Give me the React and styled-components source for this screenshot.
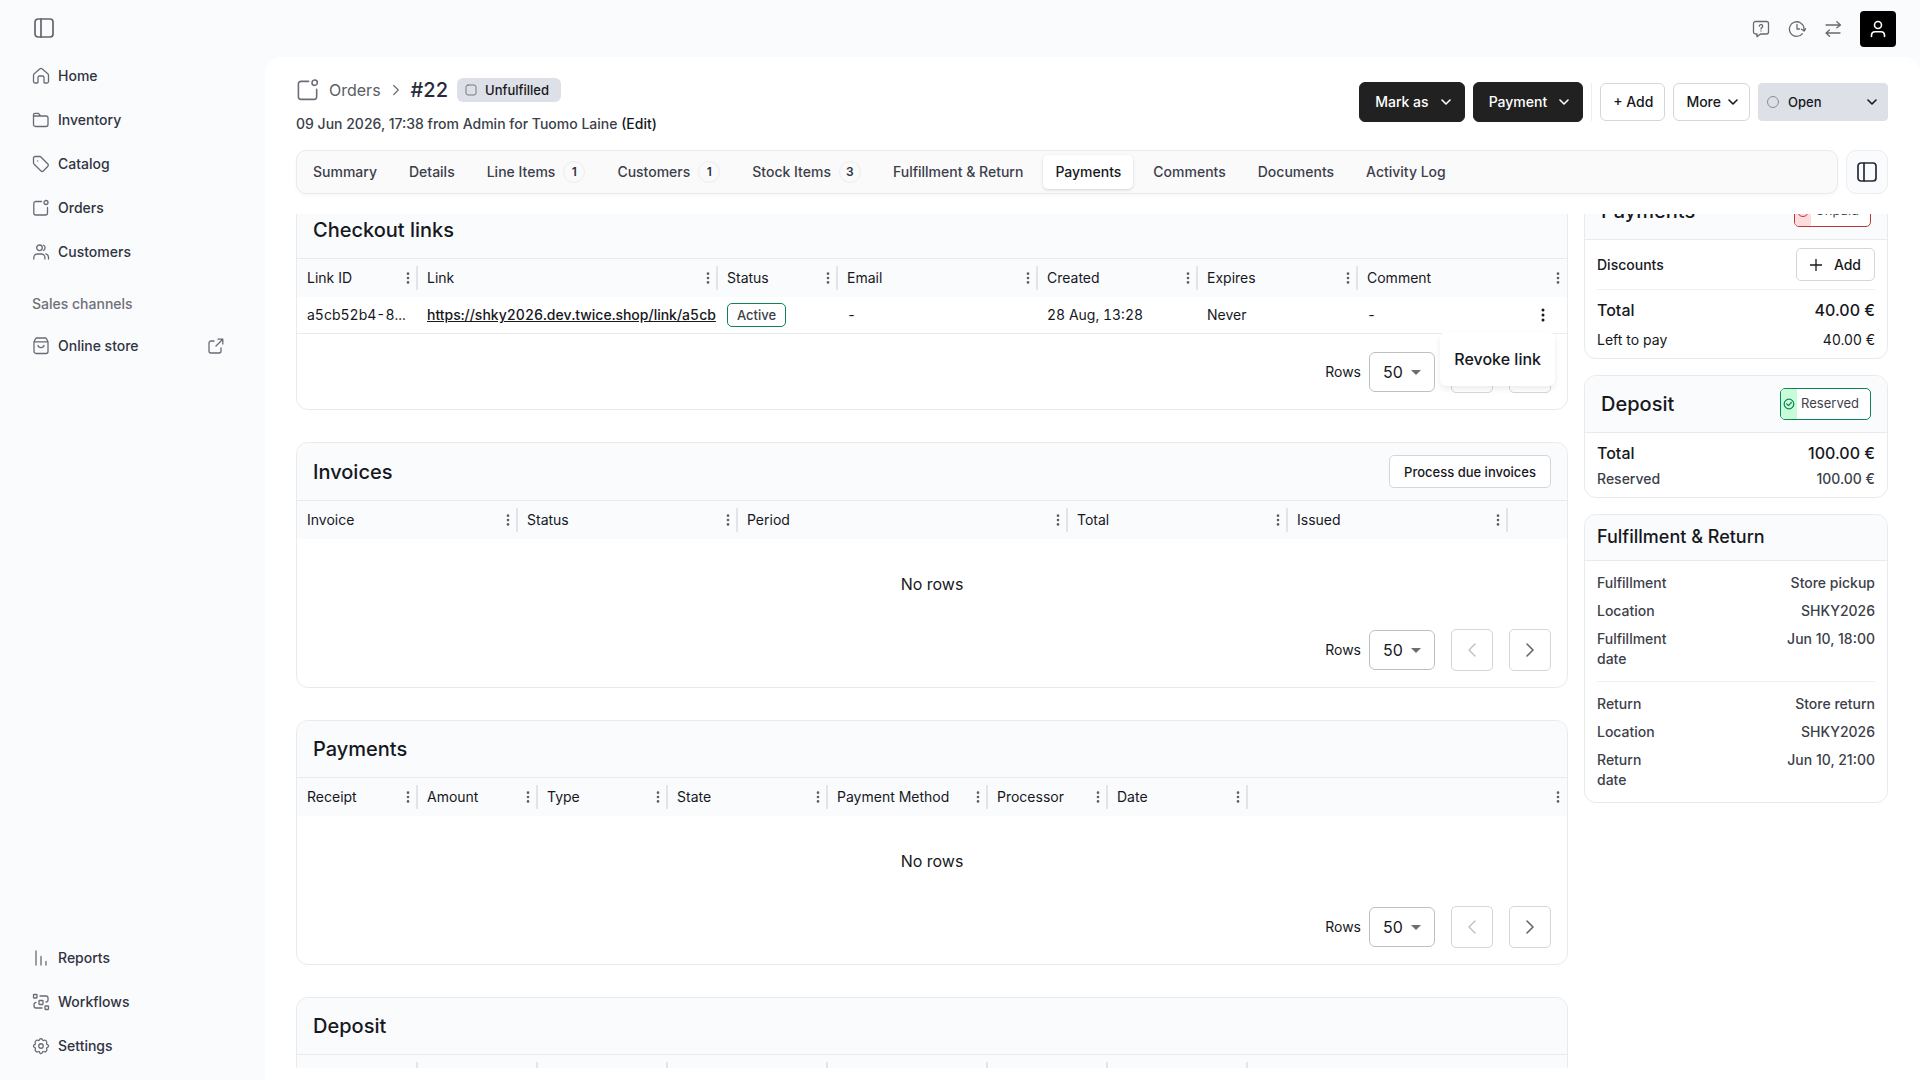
import { useLayoutEffect, useRef, useState } from "react";
import styled, { createGlobalStyle } from "styled-components";

const HomeIcon = () => (
  <Icon viewBox="0 0 18 18">
    <path d="M1.500 8.200a2 2 0 0 1 .7-1.500L7.700 2a2 2 0 0 1 2.600 0l5.500 4.700a2 2 0 0 1 .7 1.500v6.300a1.500 1.500 0 0 1-1.500 1.500h-2.200a.8.8 0 0 1-.8-.8V10.500A1.500 1.500 0 0 0 10.500 9h-3A1.500 1.500 0 0 0 6 10.500v4.700a.8.8 0 0 1-.8.8H3a1.500 1.500 0 0 1-1.500-1.500z" />
  </Icon>
);
const FolderIcon = () => (
  <Icon viewBox="0 0 18 18">
    <path d="M1.500 5.500V3.800A1.500 1.500 0 0 1 3 2.300h3.500L8.500 5H14a2 2 0 0 1 2 2v6.500a2 2 0 0 1-2 2H3.500a2 2 0 0 1-2-2V5H8.500" />
  </Icon>
);
const TagIcon = () => (
  <Icon viewBox="0 0 18 18">
    <path d="M1.500 3A1.500 1.500 0 0 1 3 1.500h4.700c.5 0 .9.200 1.200.5l7 7a1.600 1.600 0 0 1 0 2.200l-4.600 4.800a1.600 1.600 0 0 1-2.300 0L2.200 9.300A2 2 0 0 1 1.500 8z" />
    <path d="M5.700 5.900v.1" />
  </Icon>
);
const OrderIcon = ({ size, stroke }) => (
  <Icon viewBox="0 0 18 18" $size={size} $stroke={stroke}>
    <path d="M9.500 2.500H3.800a2 2 0 0 0-2 2V14a2 2 0 0 0 2 2h9.700a2 2 0 0 0 2-2V8.500" />
    <circle cx="14" cy="3.500" r="2" />
  </Icon>
);
const UsersIcon = () => (
  <Icon viewBox="0 0 18 18">
    <circle cx="7.500" cy="4.800" r="2.800" />
    <path d="M1.800 16v-1.300A3.700 3.700 0 0 1 5.500 11h3.700a3.700 3.700 0 0 1 3.700 3.700V16M11.500 2.200a3 3 0 0 1 0 5.300M13.800 10.800a3.700 3.700 0 0 1 2.700 3.600V16" />
  </Icon>
);
const StoreIcon = () => (
  <Icon viewBox="0 0 18 18">
    <path d="M2 4.800 3.500 1.800A1.500 1.500 0 0 1 4.800 1h8.400a1.500 1.500 0 0 1 1.300.8L16 4.800v9.700a2 2 0 0 1-2 2H4a2 2 0 0 1-2-2zM2 4.800h14M6 8.300c.5 3 5.500 3 6 0" />
  </Icon>
);
const ExternalIcon = () => (
  <Icon viewBox="0 0 18 18">
    <path d="M7 4H4a2 2 0 0 0-2 2v8a2 2 0 0 0 2 2h8a2 2 0 0 0 2-2v-3M9 9l6.500-6.500M11 2.200h4.800V7" />
  </Icon>
);
const ReportsIcon = () => (
  <Icon viewBox="0 0 18 18">
    <path d="M4 2v14M9 7.500V16M14 12.500V16" />
  </Icon>
);
const WorkflowIcon = () => (
  <Icon viewBox="0 0 18 18">
    <rect x="1.500" y="1.500" width="3.500" height="3.500" rx=".5" />
    <rect x="7" y="7.500" width="4" height="4" rx=".5" />
    <rect x="13" y="13" width="3.500" height="3.500" rx=".5" />
    <path d="M8 3h6a2 2 0 0 1 2 2v2a2 2 0 0 1-2 2M4 9.500a2 2 0 0 0-2 2V13a2 2 0 0 0 2 2h6" />
  </Icon>
);
const GearIcon = () => (
  <Icon viewBox="0 0 24 24" $stroke={1.700}>
    <circle cx="12" cy="12" r="3" />
    <path d="M10.300 3.300c.4-1.700 2.900-1.700 3.400 0a1.700 1.700 0 0 0 2.600 1.100c1.500-1 4.300 1.800 3.400 3.300a1.700 1.700 0 0 0 1 2.600c1.800.5 1.800 3 0 3.400a1.700 1.700 0 0 0-1 2.600c.9 1.500-1.900 4.300-3.400 3.400a1.700 1.700 0 0 0-2.600 1c-.5 1.800-3 1.800-3.400 0a1.700 1.700 0 0 0-2.600-1c-1.500.9-4.300-1.900-3.400-3.400a1.700 1.700 0 0 0-1-2.600c-1.800-.4-1.800-2.900 0-3.400a1.700 1.700 0 0 0 1-2.600c-.9-1.500 1.900-4.300 3.400-3.300 1 .6 2.300.1 2.600-1.100z" />
  </Icon>
);
const PanelIcon = () => (
  <Icon viewBox="0 0 20 20" $size={20} $stroke={1.700}>
    <rect x="1" y="1" width="18" height="18" rx="3" />
    <path d="M7 1v18" />
  </Icon>
);
const HelpIcon = () => (
  <Icon viewBox="0 0 18 18">
    <path d="M3.500 1.500h11a2 2 0 0 1 2 2v8.500a2 2 0 0 1-2 2H8.500L5 16.800V14H3.500a2 2 0 0 1-2-2V3.500a2 2 0 0 1 2-2z" />
    <path d="M7.300 6.200a1.700 1.700 0 1 1 2.500 1.500c-.6.300-.8.600-.8 1.200M9 10.900v.1" />
  </Icon>
);
const HistoryIcon = () => (
  <Icon viewBox="0 0 18 18">
    <path d="M14.300 13.800A7.300 7.300 0 1 1 16 8.500v2M9 4.500V9h2.500M13.500 9.200l2.500 1.800 1.700-2.300" />
  </Icon>
);
const SwapIcon = () => (
  <Icon viewBox="0 0 18 18">
    <path d="M2 5h14.500M12.800 1.800 16.500 5l-3.700 2.800M16 13H2M5.500 10 2 13l3.500 3.200" />
  </Icon>
);
const UserIcon = () => (
  <Icon viewBox="0 0 18 18" $stroke={1.600}>
    <circle cx="9" cy="5" r="3.500" />
    <path d="M2.500 16.500V15A3.500 3.500 0 0 1 6 11.800h6a3.500 3.500 0 0 1 3.500 3.200v1.500" />
  </Icon>
);
const ChevronDown = () => (
  <Icon viewBox="0 0 10 10" $size={10} $stroke={1.600}>
    <path d="M1 3l4 4 4-4" />
  </Icon>
);
const ChevronLeft = () => (
  <Icon viewBox="0 0 10 16" $size={16}>
    <path d="M8 2 2 8l6 6" />
  </Icon>
);
const ChevronRight = ({ size = 16 }) => (
  <Icon viewBox="0 0 10 16" $size={size} $stroke={1.600}>
    <path d="M2 2l6 6-6 6" />
  </Icon>
);
const PlusIcon = () => (
  <Icon viewBox="0 0 12 12" $size={12}>
    <path d="M6 0v12M0 6h12" />
  </Icon>
);
const SquareIcon = () => (
  <Icon viewBox="0 0 12 12" $size={12} $stroke={1}>
    <rect x="1" y="1" width="10" height="10" rx="2" />
  </Icon>
);
const CircleIcon = () => (
  <Icon viewBox="0 0 12 12" $size={12} $stroke={1}>
    <circle cx="6" cy="6" r="5.500" />
  </Icon>
);
const CheckIcon = () => (
  <Icon viewBox="0 0 12 12" $size={12} $stroke={1.200}>
    <path d="M3.800 6 5.500 7.600 8.300 4.500" />
    <circle cx="6" cy="6" r="4.800" />
  </Icon>
);
const Dots = ({ size = 16 }) => (
  <DotsSvg viewBox="0 0 4 16" $size={size} aria-hidden="true">
    <circle cx="2" cy="3" r="1.500" />
    <circle cx="2" cy="8" r="1.500" />
    <circle cx="2" cy="13" r="1.500" />
  </DotsSvg>
);

const mainNav = [
  { label: "Home", icon: <HomeIcon /> },
  { label: "Inventory", icon: <FolderIcon /> },
  { label: "Catalog", icon: <TagIcon /> },
  { label: "Orders", icon: <OrderIcon /> },
  { label: "Customers", icon: <UsersIcon /> },
];

const bottomNav = [
  { label: "Reports", icon: <ReportsIcon /> },
  { label: "Workflows", icon: <WorkflowIcon /> },
  { label: "Settings", icon: <GearIcon /> },
];

const tabs = [
  { label: "Summary" },
  { label: "Details" },
  { label: "Line Items", count: 1 },
  { label: "Customers", count: 1 },
  { label: "Stock Items", count: 3 },
  { label: "Fulfillment & Return" },
  { label: "Payments" },
  { label: "Comments" },
  { label: "Documents" },
  { label: "Activity Log" },
];

const linkColumns = [
  { label: "Link ID", width: 120 },
  { label: "Link", width: 300 },
  { label: "Status", width: 120 },
  { label: "Email", width: 200 },
  { label: "Created", width: 160 },
  { label: "Expires", width: 160 },
  { label: "Comment" },
];

const invoiceColumns = [
  { label: "Invoice", width: 220 },
  { label: "Status", width: 220 },
  { label: "Period", width: 330 },
  { label: "Total", width: 220 },
  { label: "Issued", width: 220 },
  { label: "", noMenu: true },
];

const paymentColumns = [
  { label: "Receipt", width: 120 },
  { label: "Amount", width: 120 },
  { label: "Type", width: 130 },
  { label: "State", width: 160 },
  { label: "Payment Method", width: 160 },
  { label: "Processor", width: 120 },
  { label: "Date", width: 140 },
  { label: "" },
];

const DataTable = ({ columns, children }) => (
  <Table>
    <colgroup>
      {columns.map((col, i) => (
        <Col key={i} $width={col.width} />
      ))}
    </colgroup>
    <thead>
      <tr>
        {columns.map((col, i) => (
          <Th key={i}>
            <HeadCell>
              <HeadLabel>{col.label}</HeadLabel>
              {!col.noMenu && (
                <ColumnMenu aria-label={`${col.label || "Row"} column menu`}>
                  <Dots size={14} />
                </ColumnMenu>
              )}
              {i < columns.length - 1 && <Separator />}
            </HeadCell>
          </Th>
        ))}
      </tr>
    </thead>
    {children && <tbody>{children}</tbody>}
  </Table>
);

const Pager = ({ id }) => (
  <PagerRow>
    <RowsLabel htmlFor={id}>Rows</RowsLabel>
    <SelectWrap>
      <RowsSelect id={id} defaultValue="50">
        <option>25</option>
        <option>50</option>
        <option>100</option>
      </RowsSelect>
      <Caret />
    </SelectWrap>
    <PagerButton aria-label="Previous page" disabled>
      <ChevronLeft />
    </PagerButton>
    <PagerButton aria-label="Next page">
      <ChevronRight />
    </PagerButton>
  </PagerRow>
);

const App = () => {
  const [activeTab, setActiveTab] = useState("Payments");
  const [menuOpen, setMenuOpen] = useState(true);
  const scrollRef = useRef(null);

  useLayoutEffect(() => {
    scrollRef.current.scrollTop = 32;
  }, []);

  return (
    <Shell>
      <GlobalStyle />
      <Sidebar>
        <SidebarToggle aria-label="Toggle sidebar">
          <PanelIcon />
        </SidebarToggle>
        <Nav>
          {mainNav.map((item) => (
            <NavLink href="#" key={item.label}>
              {item.icon}
              {item.label}
            </NavLink>
          ))}
        </Nav>
        <NavHeading>Sales channels</NavHeading>
        <NavLink href="#">
          <StoreIcon />
          <NavText>Online store</NavText>
          <ExternalIcon />
        </NavLink>
        <BottomNav>
          {bottomNav.map((item) => (
            <NavLink href="#" key={item.label}>
              {item.icon}
              {item.label}
            </NavLink>
          ))}
        </BottomNav>
      </Sidebar>

      <Body>
        <TopBar>
          <TopButton aria-label="Help"><HelpIcon /></TopButton>
          <TopButton aria-label="History"><HistoryIcon /></TopButton>
          <TopButton aria-label="Switch store"><SwapIcon /></TopButton>
          <Avatar aria-label="Account"><UserIcon /></Avatar>
        </TopBar>

        <Page>
          <PageHeader>
            <div>
              <Crumbs>
                <OrderIcon size={24} stroke={1.200} />
                <CrumbLink href="#">Orders</CrumbLink>
                <ChevronRight size={12} />
                <OrderTitle>#22</OrderTitle>
                <StatusPill>
                  <SquareIcon />
                  Unfulfilled
                </StatusPill>
              </Crumbs>
              <Meta>
                09 Jun 2026, 17:38 from Admin for Tuomo Laine <EditLink href="#">(Edit)</EditLink>
              </Meta>
            </div>
            <Actions>
              <DarkButton>Mark as <ChevronDown /></DarkButton>
              <DarkButton>Payment <ChevronDown /></DarkButton>
              <Divider />
              <LightButton>+ Add</LightButton>
              <LightButton>More <ChevronDown /></LightButton>
              <OpenButton>
                <Muted><CircleIcon /></Muted>
                <OpenText>Open</OpenText>
                <ChevronDown />
              </OpenButton>
            </Actions>
          </PageHeader>

          <TabRow>
            <TabBar role="tablist">
              {tabs.map((tab) => (
                <Tab
                  key={tab.label}
                  role="tab"
                  aria-selected={activeTab === tab.label}
                  $active={activeTab === tab.label}
                  onClick={() => setActiveTab(tab.label)}
                >
                  {tab.label}
                  {tab.count && <Count>{tab.count}</Count>}
                </Tab>
              ))}
            </TabBar>
            <PanelButton aria-label="Toggle side panel">
              <PanelIcon />
            </PanelButton>
          </TabRow>

          <ScrollArea ref={scrollRef}>
            <MainColumn>
              <Card>
                <CardHeader>
                  <CardTitle>Checkout links</CardTitle>
                </CardHeader>
                <DataTable columns={linkColumns}>
                  <tr>
                    <Td>a5cb52b4-8...</Td>
                    <Td $clip><UrlLink href="#">https://shky2026.dev.twice.shop/link/a5cb</UrlLink></Td>
                    <Td><ActiveChip>Active</ActiveChip></Td>
                    <Td>-</Td>
                    <Td>28 Aug, 13:28</Td>
                    <Td>Never</Td>
                    <Td>
                      <LastCell>
                        -
                        <RowMenuButton aria-label="Row actions" onClick={() => setMenuOpen(!menuOpen)}>
                          <Dots size={16} />
                        </RowMenuButton>
                      </LastCell>
                    </Td>
                  </tr>
                </DataTable>
                <FooterArea>
                  <Pager id="links-rows" />
                  {menuOpen && (
                    <Menu role="menu">
                      <MenuItem role="menuitem">Revoke link</MenuItem>
                    </Menu>
                  )}
                </FooterArea>
              </Card>

              <Card>
                <CardHeader>
                  <CardTitle>Invoices</CardTitle>
                  <SmallButton $wide>Process due invoices</SmallButton>
                </CardHeader>
                <DataTable columns={invoiceColumns} />
                <Empty>No rows</Empty>
                <Pager id="invoice-rows" />
              </Card>

              <Card>
                <CardHeader>
                  <CardTitle>Payments</CardTitle>
                </CardHeader>
                <DataTable columns={paymentColumns} />
                <Empty>No rows</Empty>
                <Pager id="payment-rows" />
              </Card>

              <Card>
                <CardHeader>
                  <CardTitle>Deposit</CardTitle>
                </CardHeader>
                <DataTable columns={paymentColumns.map((col) => ({ ...col, label: "" }))} />
                <Pager id="deposit-rows" />
              </Card>
            </MainColumn>

            <SideColumn>
              <Card>
                <CardHeader>
                  <CardTitle>Payments</CardTitle>
                  <Badge $color="#b93838">
                    <BadgeIcon $bg="#ffdcdc"><CircleIcon /></BadgeIcon>
                    Unpaid
                  </Badge>
                </CardHeader>
                <DiscountRow>
                  <span>Discounts</span>
                  <SmallButton><PlusIcon /> Add</SmallButton>
                </DiscountRow>
                <Totals $gap={9}>
                  <TotalLine $strong><span>Total</span><span>40.00 €</span></TotalLine>
                  <TotalLine><span>Left to pay</span><span>40.00 €</span></TotalLine>
                </Totals>
              </Card>

              <Card>
                <CardHeader>
                  <CardTitle>Deposit</CardTitle>
                  <Badge $color="#0e8358">
                    <BadgeIcon $bg="#c8fbd8"><CheckIcon /></BadgeIcon>
                    Reserved
                  </Badge>
                </CardHeader>
                <Totals $gap={5}>
                  <TotalLine $strong><span>Total</span><span>100.00 €</span></TotalLine>
                  <TotalLine $soft><span>Reserved</span><span>100.00 €</span></TotalLine>
                </Totals>
              </Card>

              <Card>
                <SmallHeader>Fulfillment &amp; Return</SmallHeader>
                <Facts>
                  <Fact><dt>Fulfillment</dt><dd>Store pickup</dd></Fact>
                  <Fact><dt>Location</dt><dd>SHKY2026</dd></Fact>
                  <Fact><dt>Fulfillment date</dt><dd>Jun 10, 18:00</dd></Fact>
                </Facts>
                <Rule />
                <Facts>
                  <Fact><dt>Return</dt><dd>Store return</dd></Fact>
                  <Fact><dt>Location</dt><dd>SHKY2026</dd></Fact>
                  <Fact><dt>Return date</dt><dd>Jun 10, 21:00</dd></Fact>
                </Facts>
              </Card>
            </SideColumn>
          </ScrollArea>
        </Page>
      </Body>
    </Shell>
  );
};

const GlobalStyle = createGlobalStyle`
  * {
    box-sizing: border-box;
  }
  body {
    margin: 0;
    background: #fafbfd;
    color: #16181d;
    font-family: Inter, "Liberation Sans", sans-serif;
    font-size: 14px;
    line-height: 20px;
  }
  button, select {
    font: inherit;
    color: inherit;
    cursor: pointer;
  }
  a {
    color: inherit;
    text-decoration: none;
  }
`;

const Icon = styled.svg`
  width: ${(p) => p.$size || 18}px;
  height: ${(p) => p.$size || 18}px;
  flex: none;
  fill: none;
  stroke: currentColor;
  stroke-width: ${(p) => p.$stroke || 1.3};
  stroke-linecap: round;
  stroke-linejoin: round;
`;
const DotsSvg = styled.svg`
  width: 4px;
  height: ${(p) => p.$size}px;
  fill: currentColor;
`;

const Shell = styled.div`
  display: flex;
  height: 100vh;
`;
const Sidebar = styled.aside`
  display: flex;
  flex-direction: column;
  flex: none;
  width: 265px;
  padding: 8px 32px 12px;
`;
const PlainButton = styled.button`
  display: flex;
  align-items: center;
  justify-content: center;
  padding: 0;
  border: none;
  background: none;
`;
const SidebarToggle = styled(PlainButton)`
  width: 24px;
  height: 40px;
  margin-bottom: 6px;
  color: #63656b;
`;
const Nav = styled.nav`
  display: flex;
  flex-direction: column;
`;
const BottomNav = styled(Nav)`
  margin-top: auto;
`;
const NavLink = styled.a`
  display: flex;
  align-items: center;
  gap: 8px;
  height: 44px;
  padding-right: 8px;
  color: #30343f;
  font-weight: 500;
  svg {
    color: #686b75;
  }
`;
const NavText = styled.span`
  flex: 1;
`;
const NavHeading = styled.div`
  margin-top: 20px;
  color: #6d7078;
  font-weight: 500;
  margin-bottom: 10px;
`;

const Body = styled.div`
  display: flex;
  flex-direction: column;
  flex: 1;
  min-width: 0;
`;
const TopBar = styled.header`
  display: flex;
  align-items: center;
  justify-content: flex-end;
  gap: 18px;
  flex: none;
  height: 57px;
  padding-right: 24px;
  color: #686a70;
`;
const TopButton = styled(PlainButton)`
  width: 18px;
  height: 18px;
`;
const Avatar = styled(PlainButton)`
  width: 36px;
  height: 36px;
  border-radius: 4px;
  background: #000;
  color: #fff;
`;
const Page = styled.main`
  display: flex;
  flex-direction: column;
  flex: 1;
  min-height: 0;
  padding: 20px 32px 12px 31px;
  border-radius: 16px 16px 0 0;
  background: #fff;
`;

const PageHeader = styled.div`
  display: flex;
  justify-content: space-between;
  margin-bottom: 16px;
`;
const Crumbs = styled.div`
  display: flex;
  align-items: center;
  gap: 9px;
  height: 26px;
  margin-bottom: 11px;
  color: #6b6e76;
`;
const CrumbLink = styled.a`
  color: #5a5d66;
  font-size: 16px;
`;
const OrderTitle = styled.h1`
  margin: 0;
  color: #262b3a;
  font-size: 20px;
  font-weight: 500;
`;
const StatusPill = styled.span`
  display: flex;
  align-items: center;
  gap: 8px;
  height: 24px;
  padding: 0 12px 0 8px;
  border-radius: 6px;
  background: #dee0e7;
  color: #16181d;
  font-size: 13px;
  font-weight: 500;
  svg {
    color: #777a83;
  }
`;
const Meta = styled.p`
  margin: 0;
  color: #3c3f4a;
  font-weight: 500;
`;
const EditLink = styled.a`
  color: #16181d;
`;
const Actions = styled.div`
  display: flex;
  align-items: center;
  gap: 8px;
  height: 50px;
`;
const Button = styled.button`
  display: flex;
  align-items: center;
  gap: 12px;
  height: 38px;
  padding: 0 12px;
  border: 1px solid #d5d6da;
  border-radius: 6px;
  background: #fff;
  font-weight: 500;
  white-space: nowrap;
`;
const DarkButton = styled(Button)`
  height: 40px;
  padding: 0 13px 0 15px;
  border-color: #212121;
  background: #212121;
  color: #fff;
`;
const LightButton = styled(Button)`
  gap: 7px;
  padding-right: 11px;
`;
const OpenButton = styled(Button)`
  width: 130px;
  padding: 0 10px 0 8px;
  border-radius: 4px;
  border-color: #dee0e7;
  background: #dee0e7;
  gap: 9px;
  font-size: 13px;
`;
const OpenText = styled.span`
  flex: 1;
  text-align: left;
`;
const Muted = styled.span`
  display: flex;
  color: #8a8d96;
`;
const Divider = styled.div`
  width: 1px;
  height: 38px;
  background: #eeeef0;
`;

const TabRow = styled.div`
  display: flex;
  gap: 8px;
  margin-bottom: 20px;
`;
const TabBar = styled.div`
  display: flex;
  align-items: center;
  gap: 8px;
  flex: 1;
  height: 44px;
  padding: 4px;
  border: 1px solid #e9eaeb;
  border-radius: 10px;
  background: #fafafb;
  box-shadow: 0 2px 4px rgb(0 0 0 / 3%);
`;
const Tab = styled.button`
  display: flex;
  align-items: center;
  gap: 8px;
  height: 34px;
  padding: 0 12px;
  border: none;
  border-radius: 5px;
  background: ${(p) => (p.$active ? "#fff" : "none")};
  box-shadow: ${(p) => (p.$active ? "0 1px 3px rgb(0 0 0 / 15%)" : "none")};
  color: ${(p) => (p.$active ? "#16181d" : "#3c3f4a")};
  font-weight: 500;
  white-space: nowrap;
`;
const Count = styled.span`
  width: 22px;
  border: 1px solid #ededef;
  border-radius: 11px;
  color: #30343f;
  font-size: 12px;
  font-weight: 600;
  line-height: 20px;
  text-align: center;
`;
const PanelButton = styled(PlainButton)`
  width: 42px;
  height: 44px;
  border: 1px solid #ededf0;
  border-radius: 10px;
  background: #fafbfc;
  color: #262b3a;
`;

const ScrollArea = styled.div`
  display: flex;
  align-items: flex-start;
  gap: 16px;
  flex: 1;
  min-height: 0;
  overflow-y: auto;
  scrollbar-width: none;
`;
const MainColumn = styled.div`
  display: flex;
  flex-direction: column;
  gap: 32px;
  flex: 1;
  min-width: 0;
  padding-top: 19px;
`;
const SideColumn = styled.div`
  display: flex;
  flex-direction: column;
  gap: 16px;
  flex: none;
  width: 304px;
`;
const Card = styled.section`
  border: 1px solid #e9eaec;
  border-radius: 12px;
  background: #fff;
`;
const CardHeader = styled.div`
  display: flex;
  align-items: center;
  justify-content: space-between;
  padding: 12px 16px;
  border-bottom: 1px solid #e9eaec;
  border-radius: 12px 12px 0 0;
  background: #fafbfd;
`;
const CardTitle = styled.h2`
  margin: 0;
  font-size: 20px;
  font-weight: 500;
  line-height: 32px;
`;
const SmallButton = styled(Button)`
  height: 33px;
  padding: 0 ${(p) => (p.$wide ? 14 : 13)}px;
  border-radius: 5px;
  font-size: ${(p) => (p.$wide ? 13 : 14)}px;
`;

const Table = styled.table`
  width: 100%;
  border-spacing: 0;
  table-layout: fixed;
`;
const Col = styled.col`
  width: ${(p) => (p.$width ? `${p.$width}px` : "auto")};
`;
const Th = styled.th`
  height: 38px;
  padding: 0;
  background: #fafbfd;
  font-weight: 400;
  text-align: left;
`;
const HeadCell = styled.div`
  display: flex;
  align-items: center;
  gap: 6px;
  margin-right: -1px;
  padding-left: 10px;
`;
const HeadLabel = styled.span`
  flex: 1;
  white-space: nowrap;
`;
const ColumnMenu = styled(PlainButton)`
  color: #5d5f66;
  &:last-child {
    margin-right: 8px;
  }
`;
const Separator = styled.span`
  width: 2px;
  height: 24px;
  background: #e3e4e7;
`;
const Td = styled.td`
  height: 37px;
  padding: 0 ${(p) => (p.$clip ? 0 : 9)}px 0 10px;
  border-bottom: 1px solid #e9eaec;
  overflow: hidden;
  font-variant-numeric: tabular-nums;
  text-overflow: ${(p) => (p.$clip ? "clip" : "ellipsis")};
  white-space: nowrap;
`;
const UrlLink = styled.a`
  font-weight: 500;
  text-decoration: underline;
`;
const ActiveChip = styled.span`
  display: inline-block;
  padding: 0 9px;
  border: 1px solid #0e8358;
  border-radius: 5px;
  color: #3c3f4a;
  font-size: 13px;
  font-weight: 500;
  line-height: 22px;
`;
const LastCell = styled.div`
  display: flex;
  align-items: center;
  justify-content: space-between;
`;
const RowMenuButton = styled(PlainButton)`
  width: 30px;
  height: 30px;
`;
const FooterArea = styled.div`
  position: relative;
  padding-top: 17px;
`;
const PagerRow = styled.div`
  display: flex;
  align-items: center;
  justify-content: flex-end;
  gap: 16px;
  padding: 0 16px 16px;
`;
const RowsLabel = styled.label`
  margin-right: -8px;
`;
const SelectWrap = styled.div`
  display: flex;
  align-items: center;
`;
const RowsSelect = styled.select`
  width: 66px;
  height: 40px;
  padding: 0 13px;
  border: 1px solid #bfc0c5;
  border-radius: 6px;
  background: #fff;
  appearance: none;
  font-size: 16px;
`;
const Caret = styled.span`
  width: 0;
  margin-left: -24px;
  margin-right: 14px;
  border: 5px solid transparent;
  border-top-color: #6b6d73;
  border-bottom: none;
  pointer-events: none;
`;
const PagerButton = styled(PlainButton)`
  width: 42px;
  height: 42px;
  border: 1px solid #d5d6da;
  border-radius: 5px;
  color: ${(p) => (p.disabled ? "#bbbcc0" : "#63656b")};
`;
const Menu = styled.div`
  position: absolute;
  top: -2px;
  right: 12px;
  padding: 8px 0;
  border-radius: 6px;
  background: #fff;
  box-shadow: 0 3px 6px rgb(0 0 0 / 8%);
`;
const MenuItem = styled(PlainButton)`
  height: 38px;
  padding: 0 14px;
  font-size: 16px;
  font-weight: 500;
`;
const Empty = styled.div`
  display: flex;
  align-items: center;
  justify-content: center;
  height: 90px;
  font-size: 16px;
`;

const Badge = styled.span`
  display: flex;
  height: 32px;
  border: 1px solid ${(p) => p.$color};
  border-radius: 5px;
  padding-right: 11px;
  overflow: hidden;
  background: #fff;
  color: #3c3f4a;
  font-size: 13px;
  line-height: 29px;
  svg {
    color: ${(p) => p.$color};
  }
`;
const BadgeIcon = styled.span`
  display: flex;
  align-items: center;
  padding: 0 2px;
  margin-right: 4px;
  background: ${(p) => p.$bg};
`;
const DiscountRow = styled.div`
  display: flex;
  align-items: center;
  justify-content: space-between;
  margin: 0 12px;
  padding: 8px 0;
  border-bottom: 1px solid #f1f1f3;
  font-weight: 500;
`;
const Totals = styled.div`
  display: flex;
  flex-direction: column;
  gap: ${(p) => p.$gap}px;
  padding: 9px 12px 8px;
`;
const TotalLine = styled.div`
  display: flex;
  justify-content: space-between;
  color: ${(p) => (p.$soft ? "#3c3f4a" : "#16181d")};
  font-size: ${(p) => (p.$strong ? 16 : 14)}px;
  font-weight: ${(p) => (p.$strong || p.$soft ? 500 : 400)};
  line-height: ${(p) => (p.$strong ? 22 : 20)}px;
`;
const SmallHeader = styled.h2`
  margin: 0;
  padding: 10px 12px 11px;
  border-bottom: 1px solid #e9eaec;
  border-radius: 12px 12px 0 0;
  background: #fafbfd;
  font-size: 18px;
  font-weight: 500;
  line-height: 24px;
`;
const Facts = styled.dl`
  display: flex;
  flex-direction: column;
  gap: 8px;
  margin: 0;
  padding: 12px;
`;
const Fact = styled.div`
  display: flex;
  justify-content: space-between;
  color: #3c3f4a;
  font-weight: 500;
  dt {
    width: 76px;
  }
  dd {
    margin: 0;
  }
`;
const Rule = styled.hr`
  margin: 0 12px;
  border: none;
  border-top: 1px solid #f1f1f3;
`;

export default App;
